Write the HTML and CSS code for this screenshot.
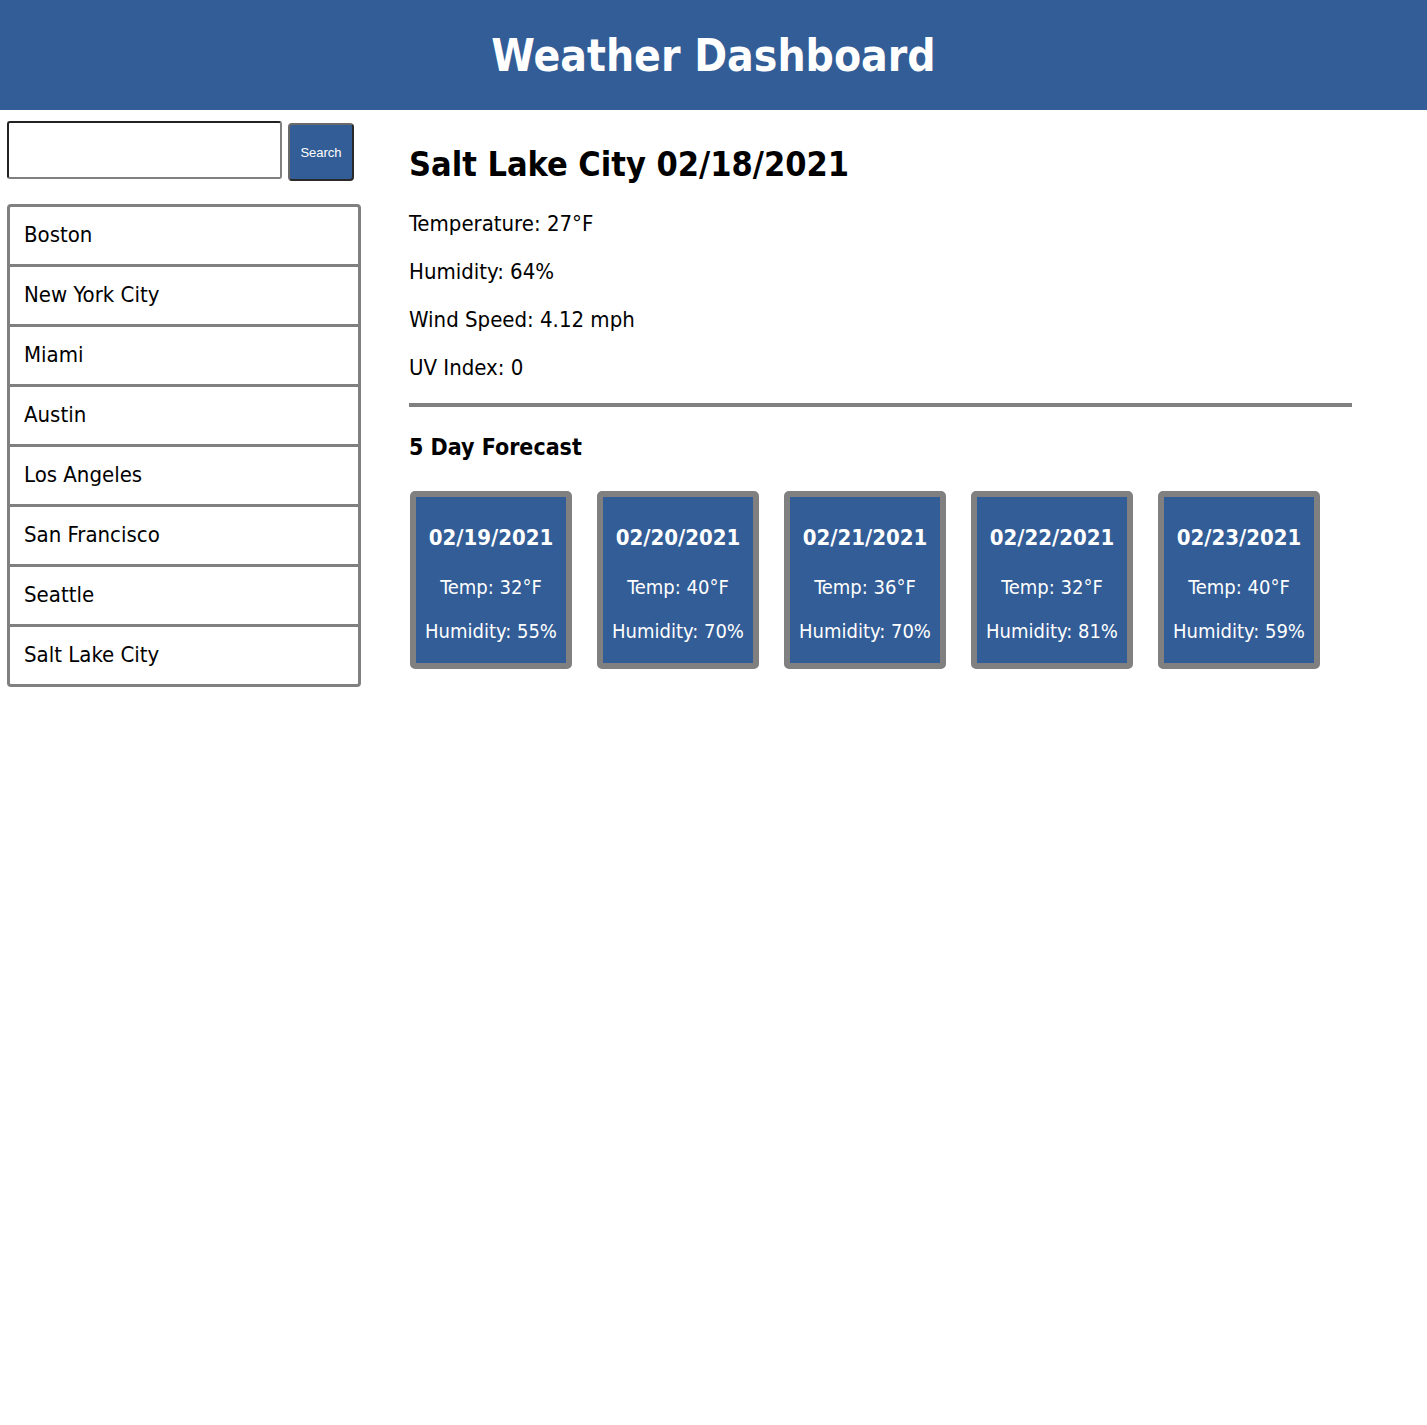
FILE: index.html
```html
<!DOCTYPE html>
<html>
<head>
<meta charset="utf-8">
<title>Weather Dashboard</title>
<link rel="stylesheet" href="styles.css">
</head>
<body>
<header class="top">
  <h1 class="title">Weather Dashboard</h1>
</header>
<div class="layout">
  <aside class="sidebar">
    <form class="search">
      <input class="search-input" type="text">
      <button class="search-btn" type="button">Search</button>
    </form>
    <ul class="cities">
      <li class="city">Boston</li>
      <li class="city">New York City</li>
      <li class="city">Miami</li>
      <li class="city">Austin</li>
      <li class="city">Los Angeles</li>
      <li class="city">San Francisco</li>
      <li class="city">Seattle</li>
      <li class="city">Salt Lake City</li>
    </ul>
  </aside>
  <main class="main">
    <h2 class="current-title">Salt Lake City 02/18/2021</h2>
    <p class="stat">Temperature: 27°F</p>
    <p class="stat">Humidity: 64%</p>
    <p class="stat">Wind Speed: 4.12 mph</p>
    <p class="stat">UV Index: 0</p>
    <div class="rule"></div>
    <h3 class="forecast-title">5 Day Forecast</h3>
    <div class="cards">
      <div class="card"><p class="card-date">02/19/2021</p><p class="card-line">Temp: 32°F</p><p class="card-line">Humidity: 55%</p></div>
      <div class="card"><p class="card-date">02/20/2021</p><p class="card-line">Temp: 40°F</p><p class="card-line">Humidity: 70%</p></div>
      <div class="card"><p class="card-date">02/21/2021</p><p class="card-line">Temp: 36°F</p><p class="card-line">Humidity: 70%</p></div>
      <div class="card"><p class="card-date">02/22/2021</p><p class="card-line">Temp: 32°F</p><p class="card-line">Humidity: 81%</p></div>
      <div class="card"><p class="card-date">02/23/2021</p><p class="card-line">Temp: 40°F</p><p class="card-line">Humidity: 59%</p></div>
    </div>
  </main>
</div>
</body>
</html>
```
FILE: styles.css
```css
html, body {
  margin: 0;
  padding: 0;
  background: #ffffff;
}
body {
  font-family: "DejaVu Sans Condensed", "DejaVu Sans", sans-serif;
  color: #000;
}
.top {
  background: #325d97;
  height: 110px;
  display: flex;
  align-items: center;
  justify-content: center;
}
.title {
  margin: 0;
  color: #fff;
  font-size: 44px;
  font-weight: bold;
}
.layout {
  display: flex;
  align-items: flex-start;
}
.sidebar {
  width: 354px;
  padding: 11px 0 0 7px;
  flex: none;
}
.search {
  display: flex;
  align-items: flex-start;
  gap: 6px;
  margin: 0;
}
.search-input {
  box-sizing: border-box;
  width: 275px;
  height: 58px;
  margin: 0;
  border: 2px solid;
  border-color: #222 #808080 #808080 #222;
  border-radius: 3px;
  background: #fff;
}
.search-btn {
  box-sizing: border-box;
  margin-top: 2px;
  width: 66px;
  height: 58px;
  background: #325d97;
  color: #fff;
  font-family: "Liberation Sans", Arial, sans-serif;
  font-size: 13px;
  border: 2px solid;
  border-color: #6a6a6a #2a2a2a #2a2a2a #6a6a6a;
  border-radius: 4px;
  padding: 0;
}
.cities {
  list-style: none;
  margin: 23px 0 0 0;
  padding: 0;
  border: 3px solid #808080;
  border-radius: 4px;
}
.city {
  box-sizing: border-box;
  height: 60px;
  padding: 0 0 2px 14px;
  display: flex;
  align-items: center;
  font-size: 22px;
  border-bottom: 3px solid #808080;
}
.city:last-child {
  border-bottom: none;
  height: 57px;
}
.main {
  margin-left: 48px;
  width: 943px;
  padding-top: 22px;
}
.current-title {
  margin: 12px 0 26px 0;
  font-size: 34px;
  font-weight: bold;
  line-height: 40px;
}
.stat {
  margin: 0 0 20px 0;
  font-size: 22px;
  line-height: 28px;
}
.rule {
  height: 4px;
  background: #808080;
  margin-top: 21px;
}
.forecast-title {
  margin: 25px 0 0 0;
  font-size: 23px;
  line-height: 30px;
  font-weight: bold;
}
.cards {
  display: flex;
  gap: 25px;
  margin-top: 29px;
  margin-left: 1px;
}
.card {
  box-sizing: border-box;
  width: 162px;
  height: 178px;
  background: #325d97;
  border: 6px solid #808080;
  border-radius: 5px;
  color: #fff;
  text-align: center;
  padding-top: 29px;
}
.card p {
  margin: 0;
  font-size: 20px;
  line-height: 24px;
}
.card .card-date {
  font-weight: bold;
  font-size: 22px;
  margin-bottom: 25px;
}
.card .card-line {
  margin-bottom: 20px;
}
```
